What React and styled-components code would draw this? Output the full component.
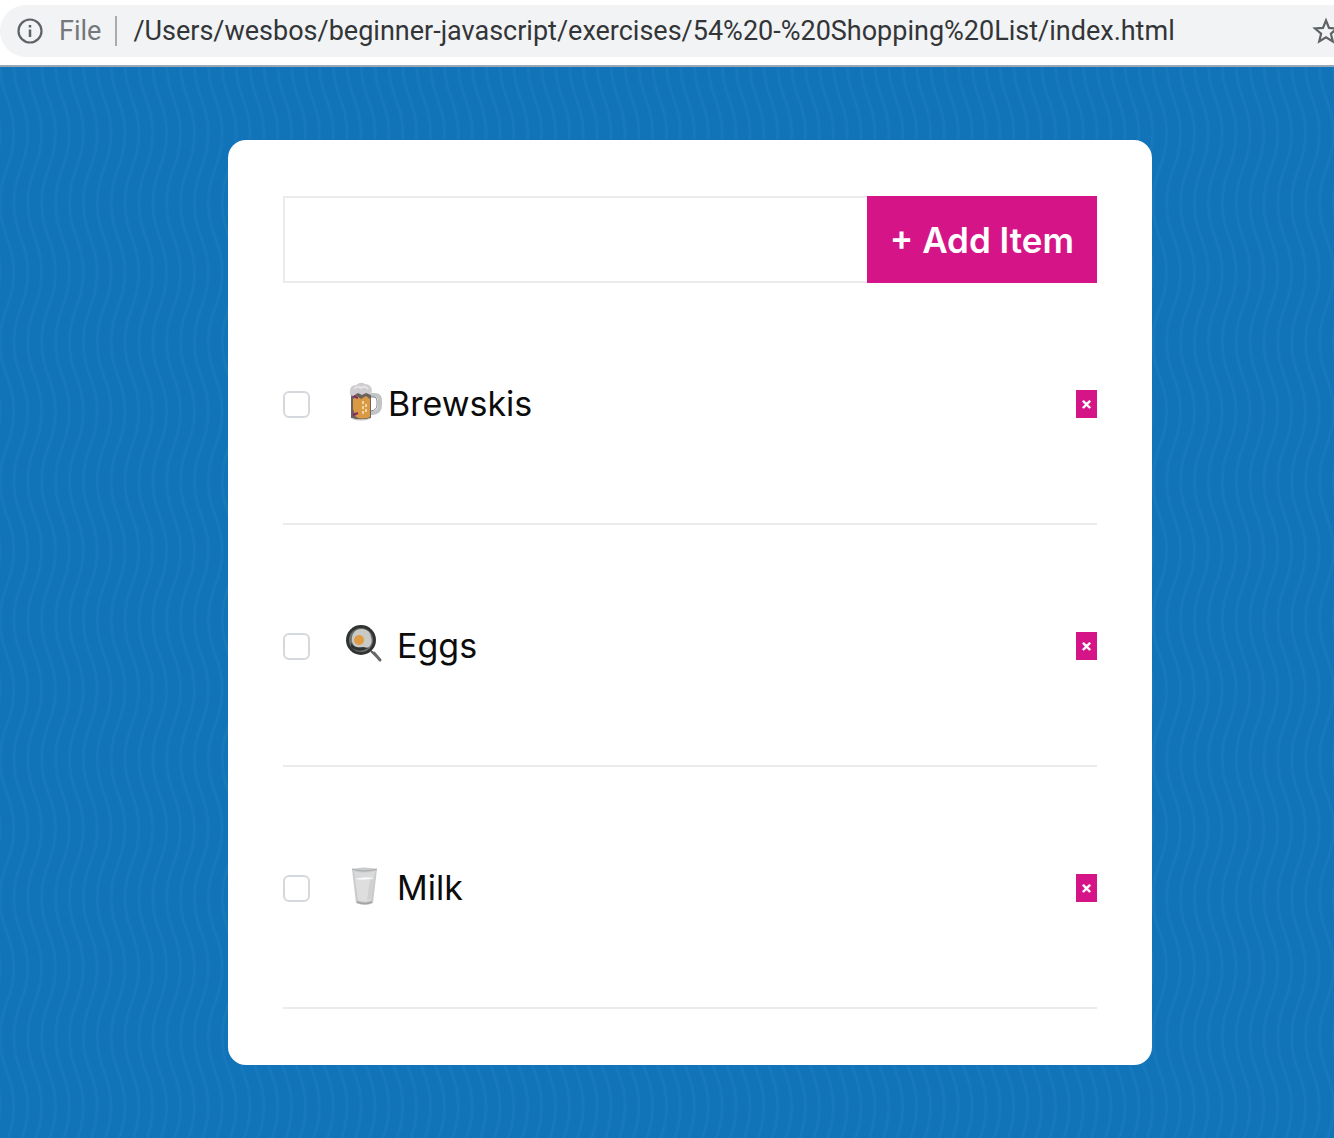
import React, { useState } from "react";
import styled, { createGlobalStyle } from "styled-components";

const BLUE = "#1173b8";
const PINK = "#d51488";
const RULE = "#ebebeb";

/* Nine parallel wavy strands; the tile repeats in both directions. */
const strands = Array.from({ length: 11 }, (_, i) => {
  const x = (i - 1) * 14;
  return `M${x} -5 L${x} 0 C${x} 30 ${x + 14} 40 ${x + 14} 70 C${x + 14} 100 ${x} 110 ${x} 140 L${x} 145`;
}).join(" ");
const waves = encodeURIComponent(
  `<svg xmlns="http://www.w3.org/2000/svg" width="126" height="140" viewBox="0 0 126 140" preserveAspectRatio="none"><path d="${strands}" fill="none" stroke="#1778bb" stroke-width="3"/></svg>`
);

const GlobalStyle = createGlobalStyle`
  *, *::before, *::after { box-sizing: border-box; }
  body {
    margin: 0;
    background: ${BLUE};
    font-family: Inter, "Liberation Sans", sans-serif;
    color: #0c0c0c;
  }
  button, input { font: inherit; color: inherit; }
`;

const Page = styled.div`
  min-height: 100vh;
  display: flex;
  flex-direction: column;
  overflow: hidden;
`;

const Toolbar = styled.header`
  background: #fff;
  padding: 5px 0 8px;
  border-bottom: 2px solid #9aa9b3;
`;

const AddressBar = styled.div`
  display: flex;
  align-items: center;
  height: 52px;
  margin-right: -32px;
  padding: 0 26px 0 16px;
  border-radius: 26px;
  background: #f1f3f4;
  font-family: Roboto, "Liberation Sans", sans-serif;
  font-size: 27px;
`;

const IconButton = styled.button`
  display: flex;
  flex: none;
  padding: 0;
  border: 0;
  background: none;
  color: #5f6368;
`;

const Scheme = styled.label`
  margin-left: 15px;
  padding-right: 14px;
  border-right: 2px solid #a9acaf;
  line-height: 30px;
  color: #75787b;
`;

const Address = styled.input`
  flex: 1;
  min-width: 0;
  margin-left: 16px;
  padding: 0;
  border: 0;
  outline: 0;
  background: none;
  color: #333538;
`;

const Main = styled.main`
  flex: 1;
  padding: 73px 182px 73px 228px;
  background: ${BLUE} url("data:image/svg+xml,${waves}") 0 -3px / 125px 139px;
`;

const Card = styled.section`
  padding: 56px 55px;
  border-radius: 18px;
  background: #fff;
`;

const AddForm = styled.form`
  display: flex;
  height: 87px;
`;

const ItemInput = styled.input`
  flex: 1;
  min-width: 0;
  padding: 0 20px;
  border: 2px solid ${RULE};
  border-right: 0;
  border-radius: 0;
  outline: 0;
  font-size: 35px;
`;

const AddButton = styled.button`
  padding: 0 23px;
  border: 0;
  background: ${PINK};
  color: #fff;
  font-size: 35px;
  font-weight: 600;
`;

const List = styled.ul`
  margin: 0;
  padding: 0;
  list-style: none;
`;

const Item = styled.li`
  display: flex;
  align-items: center;
  height: 242px;
  padding-top: 2px;
  border-bottom: 2px solid ${RULE};
`;

const Check = styled.input`
  appearance: none;
  flex: none;
  width: 27px;
  height: 27px;
  margin: 0 34px 0 0;
  border: 2px solid #d5d9dd;
  border-radius: 6px;
  background: #fff;
  &:checked { background: ${PINK}; }
`;

const Name = styled.label`
  display: flex;
  flex: 1;
  align-items: center;
  gap: ${(p) => (p.$spaced ? "9px" : "0")};
  font-size: 34px;
  line-height: 44px;
`;

const RemoveButton = styled.button`
  width: 21px;
  height: 28px;
  padding: 0;
  border: 0;
  background: ${PINK};
  color: #fff;
  font-size: 17px;
  font-weight: 700;
  line-height: 28px;
`;

const Glyph = styled.svg`
  display: block;
  flex: none;
`;

const InfoIcon = () => (
  <Glyph width="28" height="28" viewBox="0 0 28 28" aria-hidden="true">
    <circle cx="14" cy="14" r="11.5" fill="none" stroke="currentColor" strokeWidth="2.2" />
    <path d="M14 12.5v7.5M14 8v2.6" stroke="currentColor" strokeWidth="2.5" />
  </Glyph>
);

const StarIcon = () => (
  <Glyph width="28" height="28" viewBox="0 0 28 28" aria-hidden="true">
    <path
      d="M14 3.5l3 7.4 8 .6-6.100 5.200 1.900 7.800-6.800-4.200-6.800 4.200 1.900-7.800-6.100-5.200 8-.6z"
      fill="none"
      stroke="currentColor"
      strokeWidth="2.2"
    />
  </Glyph>
);

const Beer = () => (
  <Glyph width="44" height="44" viewBox="0 0 44 44" aria-hidden="true">
    <path d="M26 13h5q5 0 5 6v4q0 7-7 8h-3" fill="none" stroke="#c3c4c6" strokeWidth="4" />
    <path d="M26 15h4q3 0 3 4v4q0 5-6 6" fill="none" stroke="#85888c" strokeWidth="1" />
    <path d="M7 9h20v27q-10 3-20 0z" fill="#6b625e" />
    <path d="M9 17l4-3 4 3 5-3 4 3v18q-8 3-14 0l-3-8z" fill="#d99a43" />
    <path d="M19 19v13M22 22v8" stroke="#f1d5a5" strokeWidth="2" strokeDasharray="3 2" />
    <path d="M9 14l5 2M9 33l5-2" stroke="#8a2a63" strokeWidth="2" />
    <path d="M6 9q0-6 6-6 5-4 9-1 6 0 7 6l-1 5-5-2-4 2-4-2-5 3-3-1z" fill="#cfcdcf" />
    <path d="M10 7q4-4 7-1 4-3 7 1" fill="none" stroke="#e4e4e4" strokeWidth="2" />
    <path d="M8 36q9 3 18 0v1q-9 3-18 0z" fill="#c5c2bd" />
  </Glyph>
);

const FryingPan = () => (
  <Glyph width="44" height="44" viewBox="0 0 44 44" aria-hidden="true">
    <path d="M27 27l5 5" stroke="#555" strokeWidth="2" />
    <path d="M30 29l6 7" stroke="#6a6a6a" strokeWidth="3" strokeLinecap="round" />
    <circle cx="17" cy="16" r="15" fill="#303332" />
    <circle cx="17" cy="16" r="12" fill="#6c7170" />
    <path d="M8 13q2-9 11-8 7 1 8 8 2 6-2 10-4 2-8 0-6 2-8-3-2-3-1-7z" fill="#c9c9c5" />
    <path d="M7 19q5 6 12 4l5 1q-9 6-17-1z" fill="#303332" />
    <circle cx="15" cy="16" r="5" fill="#df9c42" />
  </Glyph>
);

const MilkGlass = () => (
  <Glyph width="44" height="44" viewBox="0 0 44 44" aria-hidden="true">
    <path d="M8 3q12-3 25 0l-4 34q-8 4-17 0z" fill="#c9cbcc" />
    <path d="M10 5q10 3 21 0l-1 7q-10-2-19 1z" fill="#d8dadb" />
    <path d="M11 13q9-3 19-1l-3 22q-6 3-13 0z" fill="#dedede" />
    <path d="M11 13q9-3 19-1-9 3-19 1z" fill="#fafafa" />
    <path d="M26 14l-3 20q3 0 4-2l3-19z" fill="#cfd0d1" />
    <path d="M13 36q8 3 15 0" fill="none" stroke="#a3a3a3" strokeWidth="1.500" />
    <path d="M8 3q12 4 25 0" fill="none" stroke="#a6a8aa" strokeWidth="1" />
  </Glyph>
);

const startingItems = [
  { id: 1, name: "Brewskis", icon: Beer, spaced: false },
  { id: 2, name: "Eggs", icon: FryingPan, spaced: true },
  { id: 3, name: "Milk", icon: MilkGlass, spaced: true },
];

export default function App() {
  const [items, setItems] = useState(startingItems);
  const [draft, setDraft] = useState("");

  const addItem = (event) => {
    event.preventDefault();
    if (!draft.trim()) return;
    setItems([...items, { id: Date.now(), name: draft.trim() }]);
    setDraft("");
  };

  return (
    <Page>
      <GlobalStyle />
      <Toolbar>
        <AddressBar>
          <IconButton type="button" aria-label="Site information">
            <InfoIcon />
          </IconButton>
          <Scheme htmlFor="address">File</Scheme>
          <Address
            id="address"
            type="text"
            defaultValue="/Users/wesbos/beginner-javascript/exercises/54%20-%20Shopping%20List/index.html"
          />
          <IconButton type="button" aria-label="Bookmark this page">
            <StarIcon />
          </IconButton>
        </AddressBar>
      </Toolbar>
      <Main>
        <Card>
          <AddForm onSubmit={addItem}>
            <ItemInput
              type="text"
              aria-label="Item name"
              value={draft}
              onChange={(event) => setDraft(event.target.value)}
            />
            <AddButton type="submit">+ Add Item</AddButton>
          </AddForm>
          <List>
            {items.map(({ id, name, icon: Icon, spaced }) => (
              <Item key={id}>
                <Check type="checkbox" id={`item-${id}`} />
                <Name htmlFor={`item-${id}`} $spaced={spaced}>
                  {Icon && <Icon />}
                  {name}
                </Name>
                <RemoveButton
                  type="button"
                  aria-label={`Remove ${name}`}
                  onClick={() => setItems(items.filter((item) => item.id !== id))}
                >
                  ×
                </RemoveButton>
              </Item>
            ))}
          </List>
        </Card>
      </Main>
    </Page>
  );
}
